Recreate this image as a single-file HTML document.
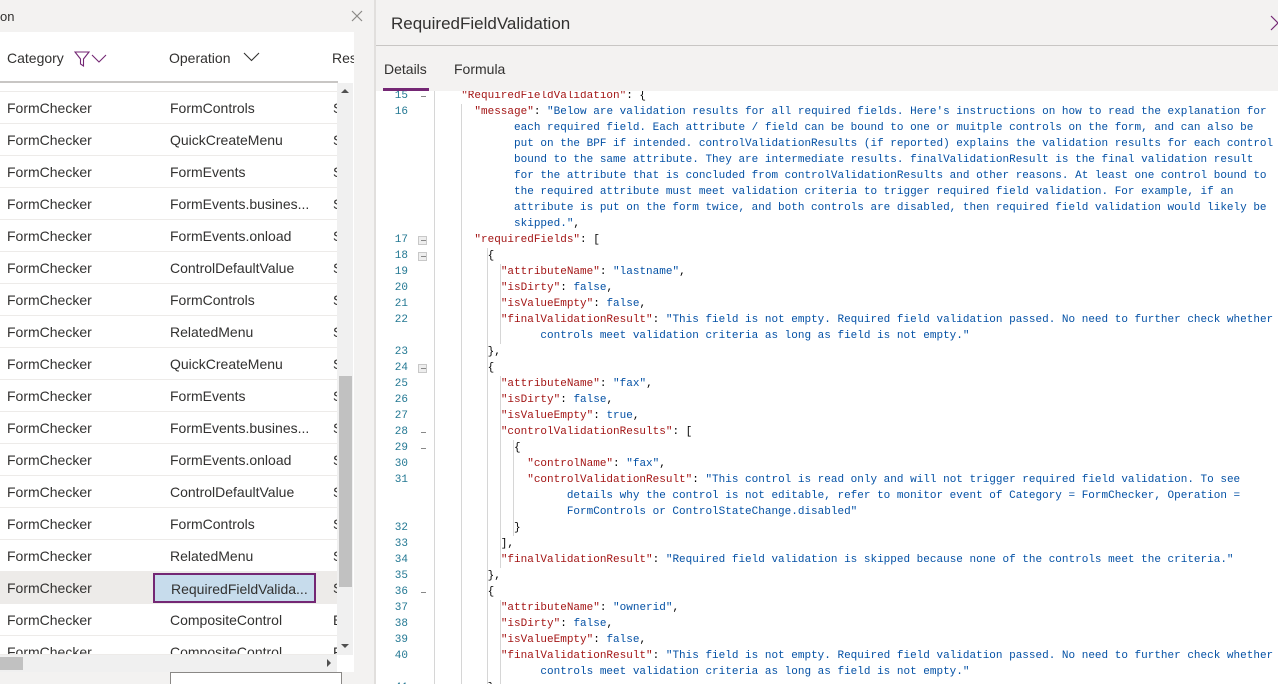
<!DOCTYPE html>
<html><head><meta charset="utf-8"><style>
*{margin:0;padding:0;box-sizing:border-box}
html,body{width:1278px;height:684px;overflow:hidden}
body{background:#f3f2f1;font-family:"Liberation Sans",sans-serif;position:relative;color:#323130}
.abs{position:absolute}
.row{position:absolute;left:0;width:338px;height:32px;border-bottom:1px solid #edebe9;font-size:14px;line-height:33px}
.row span{position:absolute;white-space:nowrap}
.c1{left:7px}.c2{left:170px}.c3{left:333px;width:5px;overflow:hidden}
pre{font-family:"Liberation Mono",monospace;font-size:11px;line-height:16px;position:absolute;left:448px;top:88px;color:#000;white-space:pre}
.k{color:#a31515}.s{color:#0451a5}
.ln{position:absolute;left:376px;width:32px;text-align:right;font-family:"Liberation Mono",monospace;font-size:11px;line-height:16px;color:#237893;top:88px}
.fm{position:absolute;left:418px;width:9px;height:9px;border:1px solid #c8c8c8;background:#eee}
.fd{position:absolute;left:421px;width:5px;height:1px;background:#888}
.g{position:absolute;width:1px;background:#d6d6d6}
</style></head><body>
<div class="abs" style="left:0;top:0;width:374px;height:32px;background:#f3f2f1"></div>
<div class="abs" style="left:0;top:9px;font-size:13px;color:#323130">on</div>
<svg class="abs" style="left:351px;top:10px" width="12" height="12"><path d="M1 1L11 11M11 1L1 11" stroke="#8a8886" stroke-width="1.2"/></svg>
<div class="abs" style="left:0;top:32px;width:354px;height:623px;background:#fff"></div>
<div class="abs" style="left:374px;top:0;width:2px;height:684px;background:#e1dfdd"></div>
<div class="abs" style="left:7px;top:50px;font-size:14px;color:#323130">Category</div>
<svg class="abs" style="left:74px;top:51px" width="36" height="16"><path d="M1 1H15L9.5 8V15L6.5 13V8Z" fill="none" stroke="#742774" stroke-width="1.1"/><path d="M18 4L25 11L32 4" fill="none" stroke="#742774" stroke-width="1.1"/></svg>
<div class="abs" style="left:169px;top:50px;font-size:14px">Operation</div>
<svg class="abs" style="left:243px;top:51px" width="18" height="12"><path d="M1 2L8.5 9.5L16 2" fill="none" stroke="#323130" stroke-width="1.1"/></svg>
<div class="abs" style="left:332px;top:50px;font-size:14px;width:22px;overflow:hidden">Res</div>
<div class="abs" style="left:0;top:81px;width:338px;height:2px;background:#c8c6c4"></div>
<div class="abs" style="left:0;top:91px;width:338px;height:1px;background:#edebe9"></div>
<div class="row" style="top:92px"><span class="c1">FormChecker</span><span class="c2">FormControls</span><span class="c3">S</span></div>
<div class="row" style="top:124px"><span class="c1">FormChecker</span><span class="c2">QuickCreateMenu</span><span class="c3">S</span></div>
<div class="row" style="top:156px"><span class="c1">FormChecker</span><span class="c2">FormEvents</span><span class="c3">S</span></div>
<div class="row" style="top:188px"><span class="c1">FormChecker</span><span class="c2">FormEvents.busines...</span><span class="c3">S</span></div>
<div class="row" style="top:220px"><span class="c1">FormChecker</span><span class="c2">FormEvents.onload</span><span class="c3">S</span></div>
<div class="row" style="top:252px"><span class="c1">FormChecker</span><span class="c2">ControlDefaultValue</span><span class="c3">S</span></div>
<div class="row" style="top:284px"><span class="c1">FormChecker</span><span class="c2">FormControls</span><span class="c3">S</span></div>
<div class="row" style="top:316px"><span class="c1">FormChecker</span><span class="c2">RelatedMenu</span><span class="c3">S</span></div>
<div class="row" style="top:348px"><span class="c1">FormChecker</span><span class="c2">QuickCreateMenu</span><span class="c3">S</span></div>
<div class="row" style="top:380px"><span class="c1">FormChecker</span><span class="c2">FormEvents</span><span class="c3">S</span></div>
<div class="row" style="top:412px"><span class="c1">FormChecker</span><span class="c2">FormEvents.busines...</span><span class="c3">S</span></div>
<div class="row" style="top:444px"><span class="c1">FormChecker</span><span class="c2">FormEvents.onload</span><span class="c3">S</span></div>
<div class="row" style="top:476px"><span class="c1">FormChecker</span><span class="c2">ControlDefaultValue</span><span class="c3">S</span></div>
<div class="row" style="top:508px"><span class="c1">FormChecker</span><span class="c2">FormControls</span><span class="c3">S</span></div>
<div class="row" style="top:540px"><span class="c1">FormChecker</span><span class="c2">RelatedMenu</span><span class="c3">S</span></div>
<div class="row" style="top:572px;background:#edebe9"><span class="c1">FormChecker</span><span class="c3">S</span></div>
<div class="abs" style="left:153px;top:573px;width:163px;height:30px;background:#c7dcec;border:2px solid #742774;font-size:14px;line-height:28px;padding-left:16px;color:#323130">RequiredFieldValida...</div>
<div class="row" style="top:604px"><span class="c1">FormChecker</span><span class="c2">CompositeControl</span><span class="c3">E</span></div>
<div class="row" style="top:636px;height:19px;overflow:hidden"><span class="c1">FormChecker</span><span class="c2">CompositeControl</span><span class="c3">F</span></div>
<div class="abs" style="left:337px;top:83px;width:16px;height:572px;background:#f0f0f0"></div>
<div class="abs" style="left:341px;top:89px;width:0;height:0;border-left:4px solid transparent;border-right:4px solid transparent;border-bottom:4px solid #505050"></div>
<div class="abs" style="left:341px;top:644px;width:0;height:0;border-left:4px solid transparent;border-right:4px solid transparent;border-top:4px solid #505050"></div>
<div class="abs" style="left:339px;top:376px;width:13px;height:211px;background:#c1c1c1"></div>
<div class="abs" style="left:0;top:655px;width:337px;height:17px;background:#f0f0f0"></div>
<div class="abs" style="left:0;top:657px;width:23px;height:13px;background:#c1c1c1"></div>
<div class="abs" style="left:327px;top:659px;width:0;height:0;border-top:4px solid transparent;border-bottom:4px solid transparent;border-left:4px solid #505050"></div>
<div class="abs" style="left:337px;top:655px;width:17px;height:17px;background:#fff"></div>
<div class="abs" style="left:170px;top:672px;width:172px;height:12px;background:#fff;border:1px solid #8a8886;border-bottom:none"></div>
<div class="abs" style="left:376px;top:0;width:902px;height:46px;border-bottom:1px solid #c8c6c4;background:#f3f2f1"></div>
<div class="abs" style="left:391px;top:14px;font-size:17px;color:#323130">RequiredFieldValidation</div>
<svg class="abs" style="left:1270px;top:15px" width="8" height="16"><path d="M1 1L8 8L1 15" fill="none" stroke="#742774" stroke-width="1.2"/></svg>
<div class="abs" style="left:384px;top:61px;font-size:14px;color:#323130">Details</div>
<div class="abs" style="left:454px;top:61px;font-size:14px;color:#323130">Formula</div>
<div class="abs" style="left:376px;top:91px;width:902px;height:593px;background:#fff;overflow:hidden">
<div style="position:absolute;left:-376px;top:-91px;width:1278px;height:684px;overflow:hidden">
<div class="g" style="left:434px;top:86px;height:700px"></div>
<div class="g" style="left:461px;top:104px;height:700px"></div>
<div class="g" style="left:487px;top:248px;height:500px"></div>
<div class="g" style="left:500px;top:264px;height:80px"></div>
<div class="g" style="left:500px;top:376px;height:192px"></div>
<div class="g" style="left:513px;top:440px;height:96px"></div>
<div class="g" style="left:500px;top:600px;height:100px"></div>
<div class="ln">15<br>16<br><br><br><br><br><br><br><br>17<br>18<br>19<br>20<br>21<br>22<br><br>23<br>24<br>25<br>26<br>27<br>28<br>29<br>30<br>31<br><br><br>32<br>33<br>34<br>35<br>36<br>37<br>38<br>39<br>40<br><br>41</div>
<div class="fd" style="top:96px"></div>
<div class="fm" style="top:236px"></div><div class="fd" style="top:240px"></div>
<div class="fm" style="top:252px"></div><div class="fd" style="top:256px"></div>
<div class="fm" style="top:364px"></div><div class="fd" style="top:368px"></div>
<div class="fd" style="top:432px"></div>
<div class="fd" style="top:448px"></div>
<div class="fd" style="top:592px"></div>
<pre>  <span class="k">"RequiredFieldValidation"</span>: {
    <span class="k">"message"</span>: <span class="s">"Below are validation results for all required fields. Here's instructions on how to read the explanation for</span>
<span class="s">          each required field. Each attribute / field can be bound to one or muitple controls on the form, and can also be</span>
<span class="s">          put on the BPF if intended. controlValidationResults (if reported) explains the validation results for each control</span>
<span class="s">          bound to the same attribute. They are intermediate results. finalValidationResult is the final validation result</span>
<span class="s">          for the attribute that is concluded from controlValidationResults and other reasons. At least one control bound to</span>
<span class="s">          the required attribute must meet validation criteria to trigger required field validation. For example, if an</span>
<span class="s">          attribute is put on the form twice, and both controls are disabled, then required field validation would likely be</span>
<span class="s">          skipped."</span>,
    <span class="k">"requiredFields"</span>: [
      {
        <span class="k">"attributeName"</span>: <span class="s">"lastname"</span>,
        <span class="k">"isDirty"</span>: <span class="s">false</span>,
        <span class="k">"isValueEmpty"</span>: <span class="s">false</span>,
        <span class="k">"finalValidationResult"</span>: <span class="s">"This field is not empty. Required field validation passed. No need to further check whether</span>
<span class="s">              controls meet validation criteria as long as field is not empty."</span>
      },
      {
        <span class="k">"attributeName"</span>: <span class="s">"fax"</span>,
        <span class="k">"isDirty"</span>: <span class="s">false</span>,
        <span class="k">"isValueEmpty"</span>: <span class="s">true</span>,
        <span class="k">"controlValidationResults"</span>: [
          {
            <span class="k">"controlName"</span>: <span class="s">"fax"</span>,
            <span class="k">"controlValidationResult"</span>: <span class="s">"This control is read only and will not trigger required field validation. To see</span>
<span class="s">                  details why the control is not editable, refer to monitor event of Category = FormChecker, Operation =</span>
<span class="s">                  FormControls or ControlStateChange.disabled"</span>
          }
        ],
        <span class="k">"finalValidationResult"</span>: <span class="s">"Required field validation is skipped because none of the controls meet the criteria."</span>
      },
      {
        <span class="k">"attributeName"</span>: <span class="s">"ownerid"</span>,
        <span class="k">"isDirty"</span>: <span class="s">false</span>,
        <span class="k">"isValueEmpty"</span>: <span class="s">false</span>,
        <span class="k">"finalValidationResult"</span>: <span class="s">"This field is not empty. Required field validation passed. No need to further check whether</span>
<span class="s">              controls meet validation criteria as long as field is not empty."</span>
      },</pre>
</div></div>
<div class="abs" style="left:383px;top:88px;width:46px;height:3px;background:#742774"></div>
</body></html>
